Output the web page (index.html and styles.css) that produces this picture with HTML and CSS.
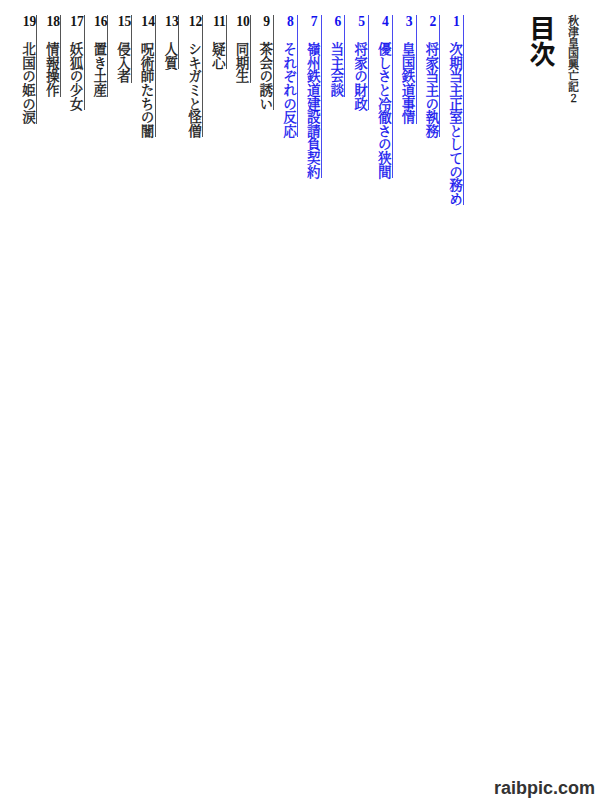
FILE: index.html
```html
<!DOCTYPE html>
<html lang="ja">
<head>
<meta charset="utf-8">
<title>目次</title>
<link rel="stylesheet" href="styles.css">
</head>
<body>
<main class="page">
  <p class="series">秋津皇国興亡記2</p>
  <h1 class="heading">目次</h1>
  <ol class="toc">
    <li class="item linked"><span class="num">1</span><span class="ttl">次期当主正室としての務め</span></li>
    <li class="item linked"><span class="num">2</span><span class="ttl">将家当主の執務</span></li>
    <li class="item linked"><span class="num">3</span><span class="ttl">皇国鉄道事情</span></li>
    <li class="item linked"><span class="num">4</span><span class="ttl">優しさと冷徹さの狭間</span></li>
    <li class="item linked"><span class="num">5</span><span class="ttl">将家の財政</span></li>
    <li class="item linked"><span class="num">6</span><span class="ttl">当主会談</span></li>
    <li class="item linked"><span class="num">7</span><span class="ttl">嶺州鉄道建設請負契約</span></li>
    <li class="item linked"><span class="num">8</span><span class="ttl">それぞれの反応</span></li>
    <li class="item"><span class="num">9</span><span class="ttl">茶会の誘い</span></li>
    <li class="item"><span class="num">10</span><span class="ttl">同期生</span></li>
    <li class="item"><span class="num">11</span><span class="ttl">疑心</span></li>
    <li class="item"><span class="num">12</span><span class="ttl">シキガミと怪僧</span></li>
    <li class="item"><span class="num">13</span><span class="ttl">人質</span></li>
    <li class="item"><span class="num">14</span><span class="ttl">呪術師たちの闇</span></li>
    <li class="item"><span class="num">15</span><span class="ttl">侵入者</span></li>
    <li class="item"><span class="num">16</span><span class="ttl">置き土産</span></li>
    <li class="item"><span class="num">17</span><span class="ttl">妖狐の少女</span></li>
    <li class="item"><span class="num">18</span><span class="ttl">情報操作</span></li>
    <li class="item"><span class="num">19</span><span class="ttl">北国の姫の涙</span></li>
  </ol>
</main>
<div class="watermark">raibpic.com</div>
</body>
</html>
```
FILE: styles.css
```css
html, body {
  margin: 0;
  padding: 0;
  background: #ffffff;
}

body {
  width: 600px;
  height: 800px;
  position: relative;
  overflow: hidden;
}

.page {
  display: flex;
  flex-direction: row-reverse;
  align-items: flex-start;
  padding: 15px 20.5px 0 0;
}

.series {
  writing-mode: vertical-rl;
  text-orientation: upright;
  font-family: "Noto Serif CJK JP", "Noto Sans CJK JP", serif;
  font-size: 11px;
  line-height: 12px;
  font-weight: 400;
  -webkit-text-stroke: 0.35px #1a1a1a;
  color: #1a1a1a;
  margin: 0 0 0 12.5px;
}

.heading {
  writing-mode: vertical-rl;
  font-family: "Noto Sans CJK JP", sans-serif;
  font-size: 26px;
  line-height: 26px;
  font-weight: 700;
  color: #111111;
  margin: 0 0 0 65px;
}

.toc {
  display: flex;
  flex-direction: row-reverse;
  align-items: flex-start;
  gap: 8.14px;
  list-style: none;
  margin: 0;
  padding: 0;
}

.item {
  writing-mode: vertical-rl;
  font-family: "Noto Serif CJK JP", "Noto Sans CJK JP", serif;
  font-size: 13.6px;
  line-height: 14.6px;
  font-weight: 400;
  color: #151515;
  -webkit-text-stroke: 0.35px #151515;
  border-right: 1px solid #555555;
  white-space: nowrap;
}

.item.linked {
  color: #1212ee;
  -webkit-text-stroke-color: #1212ee;
  border-right-color: #4a4af0;
}

.num {
  text-combine-upright: all;
  font-family: "Liberation Serif", serif;
  font-weight: 700;
  -webkit-text-stroke: 0;
  margin-bottom: 1em;
}

.watermark {
  position: absolute;
  top: 779px;
  right: 5px;
  font-family: "Liberation Sans", Arial, sans-serif;
  font-weight: 700;
  font-size: 18px;
  line-height: 1;
  color: #333333;
}
```
